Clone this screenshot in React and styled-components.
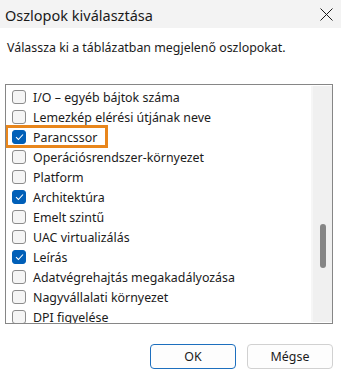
import React from "react";
import styled, { createGlobalStyle } from "styled-components";

const Global = createGlobalStyle`
  html, body { margin: 0; padding: 0; background: #ffffff; }
  body { font-family: "Noto Sans", "Open Sans", sans-serif; color: #1b1b1b; }
  #root { width: 341px; height: 380px; }
`;

const Dialog = styled.div`
  width: 341px;
  height: 380px;
  display: flex;
  flex-direction: column;
  background: #ffffff;
  overflow: hidden;
`;

const TitleBar = styled.div`
  height: 28px;
  flex: none;
  display: flex;
  align-items: center;
  justify-content: space-between;
  background: #f3f3f3;
  padding: 0 8px 0 5px;
`;

const Title = styled.span`
  font-size: 14.5px;
  color: #1a1a1a;
  margin-top: 1px;
`;

const CloseButton = styled.div`
  width: 14px;
  height: 14px;
  display: flex;
  align-items: center;
  justify-content: center;
`;

const Body = styled.div`
  flex: 1;
  display: flex;
  flex-direction: column;
  padding: 11px 8px 0 5px;
`;

const Instruction = styled.p`
  margin: 0 0 0 2px;
  font-size: 12.4px;
  line-height: 18px;
  color: #1b1b1b;
`;

const ListBox = styled.div`
  position: relative;
  margin-top: 27px;
  height: 238px;
  border: 1px solid #868686;
  display: flex;
  overflow: hidden;
`;

const Items = styled.div`
  flex: 1;
  display: flex;
  flex-direction: column;
  padding: 2px 0 0 6px;
`;

const Row = styled.div`
  height: 20px;
  flex: none;
  display: flex;
  align-items: center;
  gap: 7px;
  font-size: 12.4px;
  color: #1b1b1b;
`;

const Box = styled.span`
  width: 12px;
  height: 12px;
  flex: none;
  border-radius: 3px;
  border: 1px solid ${(p) => (p.$checked ? "#005fb8" : "#8c8c8c")};
  background: ${(p) => (p.$checked ? "#005fb8" : "#f5f5f5")};
  display: flex;
  align-items: center;
  justify-content: center;
`;

const Scrollbar = styled.div`
  width: 19px;
  flex: none;
  margin: 1px 0 1px 0;
  background: #f0f0f0;
  border-left: 2px solid #f6f6f6;
  display: flex;
  flex-direction: column;
  align-items: center;
  padding-top: 138px;
`;

const Thumb = styled.div`
  width: 6px;
  height: 44px;
  border-radius: 3px;
  background: #858585;
`;

const Highlight = styled.div`
  position: absolute;
  left: -1px;
  top: 40px;
  width: 97px;
  height: 17px;
  border: 3px solid #e8861c;
  pointer-events: none;
`;

const Footer = styled.div`
  display: flex;
  justify-content: flex-end;
  gap: 11px;
  margin-top: 20px;
  padding-right: -1px;
`;

const Button = styled.button`
  width: 86px;
  height: 25px;
  border-radius: 4px;
  background: #fdfdfd;
  border: 1px solid ${(p) => (p.$primary ? "#1d6fbe" : "#d1d1d1")};
  font-family: "Noto Sans", "Open Sans", sans-serif;
  font-size: 12.4px;
  color: #1b1b1b;
  padding: 0;
`;

const items = [
  ["I/O – egyéb bájtok száma", false],
  ["Lemezkép elérési útjának neve", false],
  ["Parancssor", true],
  ["Operációsrendszer-környezet", false],
  ["Platform", false],
  ["Architektúra", true],
  ["Emelt szintű", false],
  ["UAC virtualizálás", false],
  ["Leírás", true],
  ["Adatvégrehajtás megakadályozása", false],
  ["Nagyvállalati környezet", false],
  ["DPI figyelése", false],
];

const Check = () => (
  <svg width="9" height="8" viewBox="0 0 9 8">
    <path d="M1 4.2 L3.4 6.5 L8 1.5" fill="none" stroke="#ffffff" strokeWidth="1.1" />
  </svg>
);

export default function App() {
  return (
    <>
      <Global />
      <Dialog>
        <TitleBar>
          <Title>Oszlopok kiválasztása</Title>
          <CloseButton>
            <svg width="13" height="13" viewBox="0 0 13 13">
              <path d="M0.5 0.5 L12.5 12.5 M12.5 0.5 L0.5 12.5" stroke="#1a1a1a" strokeWidth="1" />
            </svg>
          </CloseButton>
        </TitleBar>
        <Body>
          <Instruction>Válassza ki a táblázatban megjelenő oszlopokat.</Instruction>
          <ListBox>
            <Items>
              {items.map(([label, checked]) => (
                <Row key={label}>
                  <Box $checked={checked}>{checked && <Check />}</Box>
                  <span>{label}</span>
                </Row>
              ))}
            </Items>
            <Scrollbar>
              <Thumb />
            </Scrollbar>
            <Highlight />
          </ListBox>
          <Footer>
            <Button $primary>OK</Button>
            <Button>Mégse</Button>
          </Footer>
        </Body>
      </Dialog>
    </>
  );
}
